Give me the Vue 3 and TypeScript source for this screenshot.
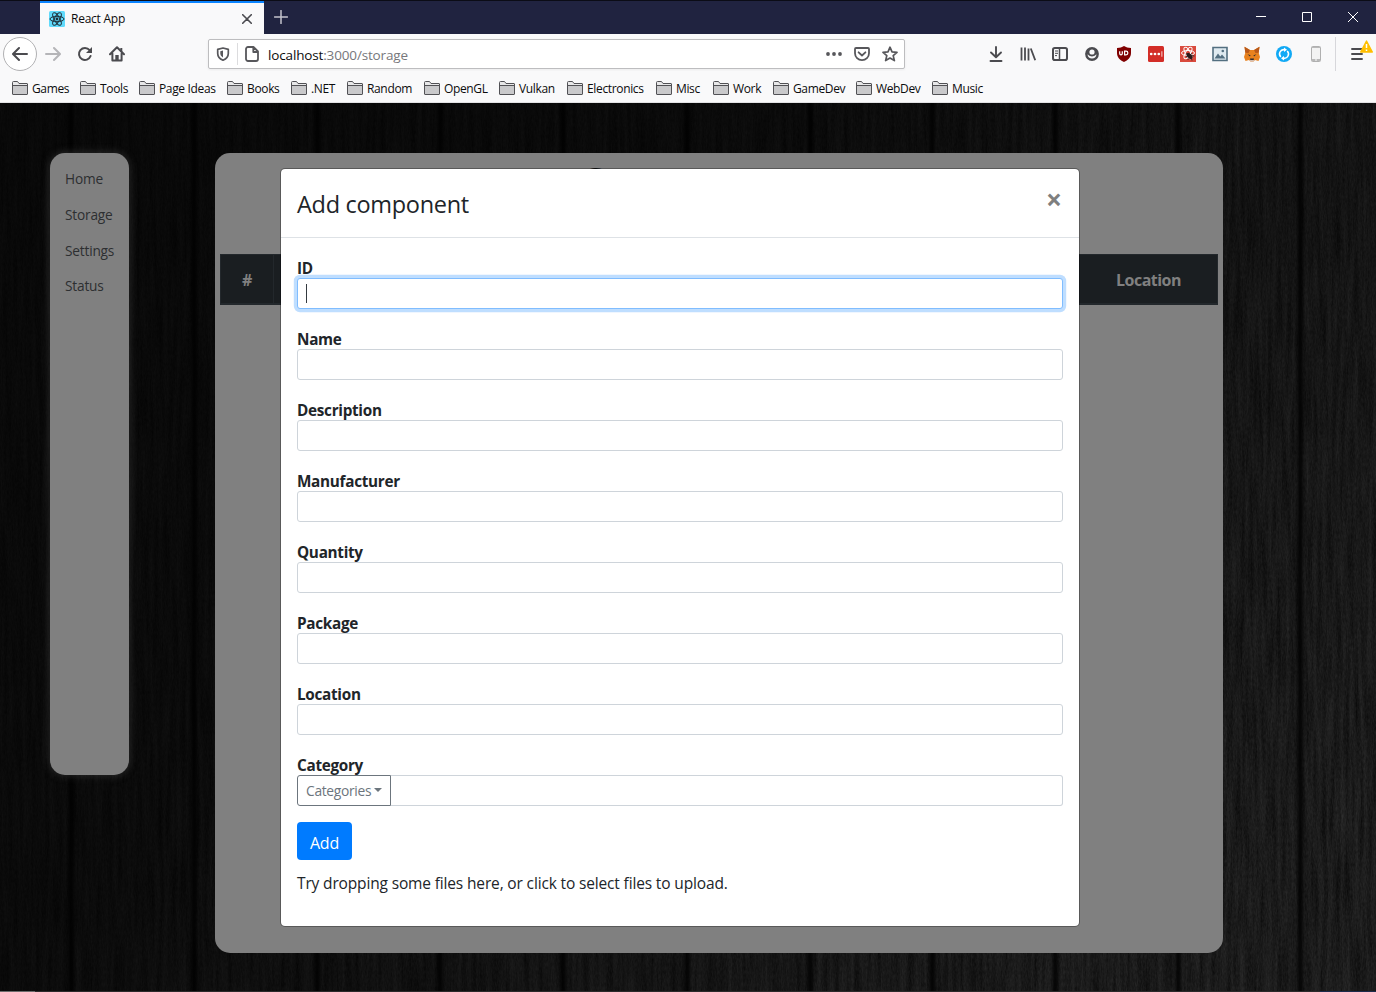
<script setup lang="ts">
interface Bookmark {
  label: string
  width: number
}

const bookmarks: Bookmark[] = [
  { label: 'Games', width: 68 },
  { label: 'Tools', width: 59 },
  { label: 'Page Ideas', width: 88 },
  { label: 'Books', width: 64 },
  { label: '.NET', width: 56 },
  { label: 'Random', width: 77 },
  { label: 'OpenGL', width: 75 },
  { label: 'Vulkan', width: 68 },
  { label: 'Electronics', width: 89 },
  { label: 'Misc', width: 57 },
  { label: 'Work', width: 60 },
  { label: 'GameDev', width: 83 },
  { label: 'WebDev', width: 76 },
  { label: 'Music', width: 60 },
]

const links: string[] = ['Home', 'Storage', 'Settings', 'Status']
const fields: string[] = ['ID', 'Name', 'Description', 'Manufacturer', 'Quantity', 'Package', 'Location']
const planks: number[] = [71, 194, 317, 440, 563, 687, 810, 932, 1055, 1178, 1300]
</script>

<template>
  <div class="window">
    <header class="titlebar">
      <div class="tab">
        <svg class="favicon" width="16" height="16" viewBox="0 0 16 16">
          <rect width="16" height="16" rx="1.5" fill="#61dafb" />
          <g fill="none" stroke="#20303a" stroke-width="1">
            <ellipse cx="8" cy="8" rx="7" ry="2.7" />
            <ellipse cx="8" cy="8" rx="7" ry="2.7" transform="rotate(60 8 8)" />
            <ellipse cx="8" cy="8" rx="7" ry="2.7" transform="rotate(120 8 8)" />
          </g>
          <circle cx="8" cy="8" r="1.4" fill="#20303a" />
        </svg>
        <span class="tab-title">React App</span>
        <svg class="tab-close" width="10" height="10" viewBox="0 0 10 10">
          <path d="M.7.7l8.6 8.6M9.3.7L.7 9.3" stroke="#4a4a4f" stroke-width="1.6" stroke-linecap="round" />
        </svg>
      </div>
      <svg class="new-tab" width="14" height="14" viewBox="0 0 14 14">
        <path d="M7 .5v13M.5 7h13" stroke="#c3c3cb" stroke-width="1.5" stroke-linecap="round" />
      </svg>
      <div class="controls">
        <svg width="46" height="32" viewBox="0 0 46 32"><path d="M18 15.5h10" stroke="#fff" /></svg>
        <svg width="46" height="32" viewBox="0 0 46 32"><path d="M18.5 11.5h9v9h-9z" fill="none" stroke="#fff" /></svg>
        <svg width="46" height="32" viewBox="0 0 46 32"><path d="M18 11l10 10M28 11L18 21" stroke="#fff" /></svg>
      </div>
    </header>

    <nav class="toolbar">
      <div class="nav-buttons">
        <span class="back">
          <svg width="16" height="16" viewBox="0 0 16 16" fill="none" stroke="#4b4b4f" stroke-width="2" stroke-linecap="round" stroke-linejoin="round">
            <path d="M15 8H1.5M7 2L1 8l6 6" />
          </svg>
        </span>
        <span class="cell">
          <svg width="16" height="16" viewBox="0 0 16 16" fill="none" stroke="#b5b5b8" stroke-width="2" stroke-linecap="round" stroke-linejoin="round">
            <path d="M1 8h13.5M9 2l6 6-6 6" />
          </svg>
        </span>
        <span class="cell">
          <svg width="16" height="16" viewBox="0 0 16 16">
            <path d="M12.6 4.1A6 6 0 1 0 13.6 10" fill="none" stroke="#4b4b4f" stroke-width="2" stroke-linecap="round" />
            <path d="M15 1v6H9z" fill="#4b4b4f" />
          </svg>
        </span>
        <span class="cell">
          <svg width="16" height="16" viewBox="0 0 16 16">
            <path d="M1 8.2L8 1.3l7 6.9M3.4 7.5V14.5h9.2V7.5" fill="none" stroke="#4b4b4f" stroke-width="2" stroke-linecap="round" stroke-linejoin="round" />
            <path d="M6.3 9h3.4v6H6.3z" fill="#4b4b4f" />
            <path d="M11.3 2h2v3.5h-2z" fill="#4b4b4f" />
          </svg>
        </span>
      </div>

      <div class="urlbar">
        <svg class="shield" width="14" height="14" viewBox="0 0 14 14">
          <path d="M7 1L12.3 2.3V6.5C12.3 9.8 10 12 7 13.2 4 12 1.7 9.8 1.7 6.5V2.3z" fill="none" stroke="#57575b" stroke-width="1.7" stroke-linejoin="round" />
          <path d="M7 3.6v6.8C5.2 9.5 4.3 8.2 4.3 6.3V4.2z" fill="#57575b" />
        </svg>
        <span class="url-sep"></span>
        <svg class="doc" width="14" height="16" viewBox="0 0 14 16">
          <path d="M3 1h5.5L13 5.5V13a2 2 0 0 1-2 2H3a2 2 0 0 1-2-2V3a2 2 0 0 1 2-2zM8.300 1v5H13" fill="none" stroke="#57575b" stroke-width="1.8" stroke-linejoin="round" />
        </svg>
        <span class="url"><b>localhost</b>:3000/storage</span>
        <span class="url-actions">
          <svg width="16" height="16" viewBox="0 0 16 16" fill="#57575b"><circle cx="2" cy="8" r="1.9" /><circle cx="8" cy="8" r="1.9" /><circle cx="14" cy="8" r="1.9" /></svg>
          <svg width="16" height="16" viewBox="0 0 16 16" fill="none" stroke="#57575b" stroke-width="1.8" stroke-linecap="round" stroke-linejoin="round">
            <path d="M2 2h12a1 1 0 0 1 1 1v4.2a7 7 0 0 1-14 0V3a1 1 0 0 1 1-1zM4.600 6.300L8 9.500l3.400-3.200" />
          </svg>
          <svg width="16" height="16" viewBox="0 0 16 16" fill="none" stroke="#57575b" stroke-width="1.7" stroke-linejoin="round">
            <path d="M8 1.200l2 4.600 5 .5-3.800 3.300 1.200 5L8 12l-4.400 2.600 1.200-5L1 6.300l5-.5z" />
          </svg>
        </span>
      </div>

      <div class="tools">
        <span class="cell">
          <svg width="14" height="16" viewBox="0 0 14 16" fill="none" stroke="#4b4b4f" stroke-width="1.9" stroke-linecap="round" stroke-linejoin="round"><path d="M7 1v10M2 6.500L7 11.300l5-4.800M1.500 15h11" /></svg>
        </span>
        <span class="cell">
          <svg width="16" height="16" viewBox="0 0 16 16" fill="none" stroke="#4b4b4f" stroke-width="1.800"><path d="M1.500 1.500v13M5 1.500v13M8.500 2.500v12M10.800 2.500l4.400 11.800" /></svg>
        </span>
        <span class="cell">
          <svg width="16" height="16" viewBox="0 0 16 16" fill="none" stroke="#4b4b4f"><rect x="1" y="2" width="14" height="12" rx="1.800" stroke-width="2" /><path d="M7.500 2v12" stroke-width="1.500" /><path d="M3 5h3M3 7.300h3M3 9.600h2" stroke-width="1" /></svg>
        </span>
        <span class="cell">
          <svg width="16" height="16" viewBox="0 0 16 16"><circle cx="8" cy="8" r="6.900" fill="#4b4b4f" /><circle cx="8" cy="6" r="2.600" fill="#f9f9fa" /><path d="M3.500 8.600c1 0 1.300 1.900 4.500 1.900s3.500-1.900 4.500-1.900C12.200 11.300 10.400 12.600 8 12.600S3.800 11.300 3.500 8.600z" fill="#f9f9fa" /></svg>
        </span>
        <span class="cell">
          <svg width="16" height="16" viewBox="0 0 16 16"><path d="M8 0c2 1.300 4 2 7 2v5c0 4.500-3 7-7 9-4-2-7-4.500-7-9V2c3 0 5-.7 7-2z" fill="#800000" /><path d="M3.700 5.200v2.400a1.300 1.300 0 0 0 2.600 0V5.200M8.600 5.200v3.700h1.400a1.850 1.850 0 0 0 0-3.700z" fill="none" stroke="#fff" stroke-width="1.200" /></svg>
        </span>
        <span class="cell">
          <svg width="16" height="16" viewBox="0 0 16 16"><rect width="16" height="16" rx="1.500" fill="#d32d27" /><g fill="#fff"><circle cx="3.200" cy="8" r="1.350" /><circle cx="7" cy="8" r="1.350" /><circle cx="10.800" cy="8" r="1.350" /><path d="M13.500 5.300h.8v5.400h-.8z" /></g></svg>
        </span>
        <span class="cell">
          <svg width="16" height="16" viewBox="0 0 16 16"><rect width="16" height="16" fill="#d94a3d" /><g fill="none" stroke="#fff" stroke-width="1"><ellipse cx="8" cy="7" rx="6.500" ry="2.500" /><ellipse cx="8" cy="7" rx="6.500" ry="2.500" transform="rotate(60 8 7)" /><ellipse cx="8" cy="7" rx="6.500" ry="2.500" transform="rotate(120 8 7)" /></g><ellipse cx="9.600" cy="10" rx="2.100" ry="3.700" transform="rotate(-45 9.600 10)" fill="#27191a" /><path d="M6 10.500l3 .5M7.500 14l2-2M12 7l-1.500 2M14.500 10l-3-.5M5.800 7.500l2 1M12 14.500l-.5-2" stroke="#27191a" stroke-width=".8" /></svg>
        </span>
        <span class="cell">
          <svg width="16" height="16" viewBox="0 0 16 16"><path d="M1 1.500h14v13H1z" fill="#dfeaf0" stroke="#536f80" stroke-width="1.600" /><path d="M2.500 12.500l3.500-5 2.300 3 1.700-2 3.500 4z" fill="#536f80" /><circle cx="10.800" cy="5" r="1.300" fill="#536f80" /></svg>
        </span>
        <span class="cell">
          <svg width="16" height="16" viewBox="0 0 16 16"><path d="M.5.8L6 4h4l5.500-3.200-.8 6L16 11l-1.500 4-3.500-1-1.500 1.500h-3L5 14l-3.500 1L0 11l1.300-4.200z" fill="#e8821e" /><path d="M.5.8L6 4 4.500 7 1.300 6.800zM15.500.8L10 4l1.500 3 3.200-.2z" fill="#b9591a" /><path d="M3.500 8.300l3 1-.5 1.200zM12.500 8.300l-3 1 .5 1.200z" fill="#2b2c34" /><path d="M6 12.500h4l-.5 2h-3z" fill="#2b2c34" /><path d="M5.500 14h5l-1 1.500h-3z" fill="#d5bfb2" /></svg>
        </span>
        <span class="cell">
          <svg width="16" height="16" viewBox="0 0 16 16"><circle cx="8" cy="8" r="8" fill="#11a9f5" /><g fill="none" stroke="#fff" stroke-width="1.500"><path d="M4.800 11A4.300 4.300 0 0 1 8.500 3.700M11.200 5A4.300 4.300 0 0 1 7.500 12.300" /></g><path d="M8 1.500l3 2.200L8 6zM8 10l-3 2.300 3 2.200z" fill="#fff" /></svg>
        </span>
        <span class="cell">
          <svg width="10" height="16" viewBox="0 0 10 16"><rect x=".5" y=".5" width="9" height="15" rx="1" fill="#f3f3f3" stroke="#b0b0b0" /><path d="M1 1h8v1H1zM1 13h8v2H1z" fill="#b9b9b9" /><path d="M4 14h2" stroke="#fff" /></svg>
        </span>
      </div>
      <div class="menu">
        <svg width="12" height="12" viewBox="0 0 12 12"><path d="M1 1h10M1 6h10M1 11h10" stroke="#4b4b4f" stroke-width="1.900" stroke-linecap="round" /></svg>
        <svg class="warning" width="13" height="13" viewBox="0 0 13 13"><path d="M6.500 1L12.300 12H.7z" fill="#ffbf00" stroke="#ffbf00" stroke-width="1.400" stroke-linejoin="round" /><path d="M6.500 4v4M6.500 9.500V11" stroke="#fff" stroke-width="1.500" /></svg>
      </div>
    </nav>

    <div class="bookmarks">
      <span v-for="b in bookmarks" :key="b.label" class="bookmark" :style="{ width: b.width + 'px' }">
        <svg width="16" height="14" viewBox="0 0 16 14">
          <path d="M.5 13V1.500a1 1 0 0 1 1-1h4l1.500 2h8a.5.5 0 0 1 .5.5v10a.5.5 0 0 1-.5.5H1a.5.5 0 0 1-.5-.5z" fill="#e8e8e9" stroke="#515155" />
          <path d="M1 4.500h14V13H1z" fill="#c9c9cb" />
          <path d="M1 4.500h14" stroke="#515155" />
        </svg>
        <span>{{ b.label }}</span>
      </span>
    </div>

    <main class="page">
      <svg class="wood" width="1376" height="888" viewBox="0 0 1376 888">
        <defs>
          <filter id="grain" x="0" y="0" width="100%" height="100%" color-interpolation-filters="sRGB">
            <feTurbulence type="fractalNoise" baseFrequency="0.22 0.012" numOctaves="5" seed="7" result="streaks" />
            <feColorMatrix in="streaks" values="0.11 0 0 0 0.02  0.11 0 0 0 0.02  0.11 0 0 0 0.02  0 0 0 0 1" result="base" />
            <feTurbulence type="fractalNoise" baseFrequency="0.8 0.25" numOctaves="2" seed="3" result="specks" />
            <feColorMatrix in="specks" values="0.09 0 0 0 -0.015  0.09 0 0 0 -0.015  0.09 0 0 0 -0.015  0 0 0 0 1" result="fine" />
            <feComposite in="base" in2="fine" operator="arithmetic" k2="1" k3="1" />
          </filter>
          <linearGradient id="shade" gradientUnits="userSpaceOnUse" x1="100" y1="0" x2="1150" y2="950">
            <stop offset="0" stop-color="#000" stop-opacity="0.7" />
            <stop offset="0.35" stop-color="#000" stop-opacity="0.62" />
            <stop offset="0.85" stop-color="#000" stop-opacity="0.12" />
            <stop offset="1" stop-color="#000" stop-opacity="0" />
          </linearGradient>
          <linearGradient id="seam">
            <stop offset="0" stop-color="#000" stop-opacity="0" />
            <stop offset="0.45" stop-color="#000" stop-opacity="0.75" />
            <stop offset="0.6" stop-color="#000" stop-opacity="0.75" />
            <stop offset="1" stop-color="#000" stop-opacity="0" />
          </linearGradient>
        </defs>
        <rect width="1376" height="888" filter="url(#grain)" />
        <rect width="1376" height="888" fill="url(#shade)" />
        <rect v-for="x in planks" :key="x" :x="x - 5" width="10" height="888" fill="url(#seam)" />
      </svg>

      <aside class="sidebar">
        <a v-for="l in links" :key="l">{{ l }}</a>
      </aside>

      <section class="panel">
        <h1>Storage</h1>
        <div class="thead">
          <span class="th number">#</span>
          <span class="th filler"></span>
          <span class="th location">Location</span>
        </div>
      </section>

      <div class="modal">
        <div class="modal-header">
          <span class="modal-title">Add component</span>
          <span class="close">×</span>
        </div>
        <div class="modal-body">
          <div v-for="(f, i) in fields" :key="f" class="field">
            <label>{{ f }}</label>
            <div class="input" :class="{ focused: i === 0 }"><i v-if="i === 0" class="caret"></i></div>
          </div>
          <div class="field">
            <label>Category</label>
            <div class="group">
              <span class="dropdown">Categories<i class="arrow"></i></span>
              <div class="input"></div>
            </div>
          </div>
          <button class="add">Add</button>
          <p>Try dropping some files here, or click to select files to upload.</p>
        </div>
      </div>
    </main>
    <div class="edge"><span class="edge-left"></span><span class="edge-right"></span></div>
  </div>
</template>

<style>
body { margin: 0; overflow: hidden; }
</style>

<style scoped>
.window {
  width: 1376px;
  height: 992px;
  display: flex;
  flex-direction: column;
  overflow: hidden;
  box-sizing: border-box;
  font-family: "Open Sans", "Noto Sans", sans-serif;
  color: #212529;
}
.window * { box-sizing: border-box; }
svg { display: block; flex: none; }

.titlebar { height: 34px; flex: none; display: flex; background: #202340; border-top: 1px solid #0b0c16; padding-left: 40px; }
.tab { width: 224px; height: 33px; background: #f9f9fa; border-top: 2px solid #0a84ff; display: flex; align-items: center; padding: 0 12px 0 9px; }
.tab-title { margin-left: 6px; font-size: 12px; letter-spacing: -0.25px; color: #0c0c0d; line-height: 16px; flex: 1; white-space: nowrap; }
.new-tab { margin: 9px 0 0 10px; }
.controls { margin-left: auto; display: flex; }

.toolbar { height: 37px; flex: none; background: #f9f9fa; display: flex; align-items: flex-start; }
.nav-buttons { width: 208px; display: flex; align-items: center; padding: 3px 0 0 3px; }
.back { width: 34px; height: 34px; border: 1px solid #b1b1b3; border-radius: 50%; background: #fff; display: flex; align-items: center; justify-content: center; }
.cell { width: 32px; height: 34px; display: flex; align-items: center; justify-content: center; flex: none; }
.urlbar { width: 697px; height: 30px; margin-top: 5px; border: 1px solid #bdbdbf; border-radius: 2px; background: #fff; display: flex; align-items: center; padding-left: 7px; box-shadow: 0 1px 3px rgba(0, 0, 0, 0.06); }
.url-sep { width: 1px; height: 22px; background: #dcdcde; margin: 0 7px 0 7px; }
.url { font-size: 13.5px; letter-spacing: -0.15px; color: #77777b; margin-left: 9px; padding-top: 1px; white-space: nowrap; }
.url b { font-weight: 400; color: #0c0c0d; }
.url-actions { margin-left: auto; display: flex; gap: 12px; padding-right: 6px; }
.tools { display: flex; margin-left: 75px; padding-top: 3px; }
.menu { position: relative; width: 41px; height: 34px; margin: 3px 0 0 3px; border-left: 1px solid #d7d7db; padding: 11px 0 0 15px; }
.warning { position: absolute; left: 24px; top: 3px; }

.bookmarks { height: 32px; flex: none; background: #f9f9fa; border-bottom: 1px solid #e2e2e4; padding: 3px 0 0 12px; display: flex; }
.bookmark { flex: none; display: flex; align-items: center; gap: 4px; height: 28px; font-size: 12px; letter-spacing: -0.35px; color: #0c0c0d; white-space: nowrap; }

.page { position: relative; height: 888px; flex: none; background: #0b0b0b; overflow: hidden; display: flex; align-items: flex-start; padding: 50px 0 0 50px; }
.wood { position: absolute; left: 0; top: 0; }
.sidebar { position: relative; width: 79px; height: 622px; flex: none; background: #808080; border-radius: 15px; box-shadow: 0 0 10px rgba(128, 128, 128, 0.32); padding: 8px 0 0 15px; display: flex; flex-direction: column; font-size: 13.7px; letter-spacing: -0.2px; color: #2d2f31; }
.sidebar a { line-height: 35.8px; height: 35.8px; }
.panel { position: relative; width: 1008px; height: 800px; margin-left: 86px; background: #808080; border-radius: 15px; padding: 0 5px; }
h1 { margin: 0; height: 101px; padding: 2px 0 0 364px; font-size: 40px; line-height: 54px; font-weight: 500; color: #111315; }
.thead { height: 51px; display: flex; background: #1a1e21; border: 1px solid #23282c; border-bottom-width: 2px; }
.th { display: flex; align-items: center; justify-content: center; font-size: 16px; font-weight: 700; color: #808080; padding-top: 2px; letter-spacing: -0.5px; }
.number { width: 53px; border-right: 1px solid #23282c; }
.filler { flex: 1; }
.location { width: 137px; }

.modal { position: absolute; left: 280px; top: 65px; width: 800px; height: 759px; background: #fff; background-clip: padding-box; border: 1px solid rgba(0, 0, 0, 0.3); border-radius: 5px; }
.modal-header { height: 69px; border-bottom: 1px solid #dee2e6; display: flex; justify-content: space-between; padding: 16px; }
.modal-title { font-size: 23.5px; line-height: 38px; letter-spacing: -0.3px; }
.close { font-size: 28px; line-height: 24px; font-weight: 700; color: #7f7f7f; padding: 2px 1px 0 0; }
.modal-body { padding: 16px; display: flex; flex-direction: column; }
.field { margin-bottom: 16px; }
label { display: block; height: 24px; line-height: 28px; font-size: 15.3px; letter-spacing: -0.3px; font-weight: 700; }
.input { height: 31px; border: 1px solid #ced4da; border-radius: 3px; background: #fff; padding: 5px 8px; flex: 1; }
.focused { border-color: #80bdff; box-shadow: 0 0 0 3.2px rgba(0, 123, 255, 0.25); }
.caret { display: block; width: 1px; height: 19px; background: #343a40; }
.group { display: flex; }
.group .input { border-left: 0; border-radius: 0 3px 3px 0; }
.dropdown { width: 94px; height: 31px; border: 1px solid #6c757d; border-radius: 3px 0 0 3px; color: #6c757d; font-size: 13.8px; letter-spacing: -0.3px; display: flex; align-items: center; padding: 0 0 0 8px; }
.arrow { margin: -2px 0 0 3px; border-top: 4px solid #6c757d; border-left: 4px solid transparent; border-right: 4px solid transparent; }
.add { width: 55px; height: 38px; border: 0; border-radius: 4px; background: #007bff; color: #fff; font-family: inherit; font-size: 16px; letter-spacing: -0.2px; padding: 3px 0 0; }
p { margin: 10px 0 0; font-size: 15.5px; line-height: 27px; letter-spacing: -0.15px; white-space: nowrap; }

.edge { height: 1px; flex: none; background: #2b2a2b; display: flex; justify-content: space-between; }
.edge-left { width: 35px; background: #6b6b6b; }
.edge-right { width: 56px; background: #1b2a4a; }
</style>
